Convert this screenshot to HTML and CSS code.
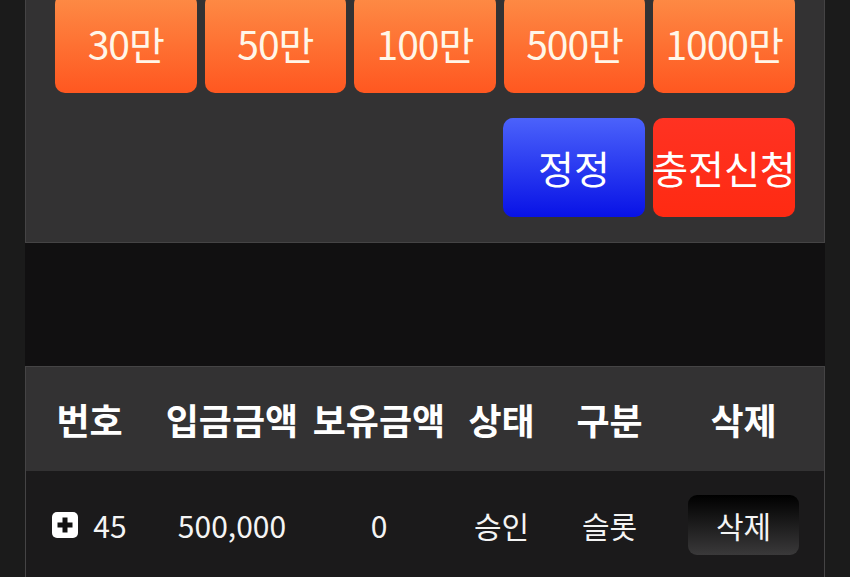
FILE: index.html
```html
<!DOCTYPE html>
<html lang="ko">
<head>
    <meta charset="UTF-8">
    <title>충전신청</title>
    <link rel="stylesheet" href="styles.css">
</head>
<body>
<div id="wrap">
    <div class="panel charge">
        <ul class="amounts">
            <li class="btn orange">30만</li>
            <li class="btn orange">50만</li>
            <li class="btn orange">100만</li>
            <li class="btn orange">500만</li>
            <li class="btn orange">1000만</li>
        </ul>
        <div class="actions">
            <span class="btn blue">정정</span>
            <span class="btn red">충전신청</span>
        </div>
    </div>
    <div class="spacer"></div>
    <div class="panel list">
        <table>
            <colgroup>
                <col class="c1"><col class="c2"><col class="c3"><col class="c4"><col class="c5"><col class="c6">
            </colgroup>
            <thead>
                <tr>
                    <th>번호</th>
                    <th>입금금액</th>
                    <th>보유금액</th>
                    <th>상태</th>
                    <th>구분</th>
                    <th>삭제</th>
                </tr>
            </thead>
            <tbody>
                <tr>
                    <td>
                        <span class="num">
                            <svg class="plus" width="26" height="26" viewBox="0 0 26 26">
                                <rect x="0" y="0" width="26" height="26" rx="5" fill="#fff"/>
                                <path d="M13 5.5v15M5.5 13h15" stroke="#111" stroke-width="5"/>
                            </svg>
                            45
                        </span>
                    </td>
                    <td>500,000</td>
                    <td>0</td>
                    <td>승인</td>
                    <td>슬롯</td>
                    <td><span class="del">삭제</span></td>
                </tr>
            </tbody>
        </table>
    </div>
</div>
</body>
</html>
```

FILE: styles.css
```css
*{
    margin: 0;
    padding: 0;
    box-sizing: border-box;
}
ul{
    list-style: none;
}
body{
    background: #1b1b1b;
    font-family: "Noto Sans CJK KR", "Noto Sans", sans-serif;
    color: #fff;
    overflow: hidden;
}
#wrap{
    width: 800px;
    margin: -6px 25px 0;
}
.panel{
    background: #333233;
    border: 1px solid #454445;
}
.charge{
    border-top: 0;
    padding: 0 29px 25px;
}
.amounts{
    display: flex;
    gap: 8px;
}
.btn{
    width: 142px;
    height: 99px;
    border-radius: 10px;
    display: flex;
    align-items: center;
    justify-content: center;
    font-size: 39px;
    line-height: 1;
    white-space: nowrap;
}
.orange{
    background: linear-gradient(#fd8c46, #ff5720);
    color: #fff6e8;
    letter-spacing: -1px;
}
.actions{
    display: flex;
    justify-content: flex-end;
    gap: 8px;
    margin-top: 25px;
}
.blue{
    background: linear-gradient(#4b62fb, #0812e6);
}
.red{
    background: linear-gradient(#ff3222, #ff2a12);
}
.spacer{
    height: 123px;
    background: #111011;
}
.list{
    border-bottom: 0;
    height: 220px;
    background: #1b1a1b;
}
table{
    width: 100%;
    border-collapse: collapse;
    table-layout: fixed;
}
.c1{ width: 127px; }
.c2{ width: 158px; }
.c3{ width: 136px; }
.c4{ width: 109px; }
.c5{ width: 107px; }
.c6{ width: 161px; }
th{
    height: 104px;
    background: #333233;
    font-size: 36px;
    font-weight: bold;
    text-align: center;
    white-space: nowrap;
}
td{
    height: 108px;
    font-size: 30px;
    text-align: center;
    white-space: nowrap;
    color: #f4f4f4;
}
.num{
    display: inline-flex;
    align-items: center;
    gap: 15px;
}
.del{
    display: inline-flex;
    align-items: center;
    justify-content: center;
    width: 111px;
    height: 60px;
    border-radius: 9px;
    background: linear-gradient(#000, #3a393a);
}
```
